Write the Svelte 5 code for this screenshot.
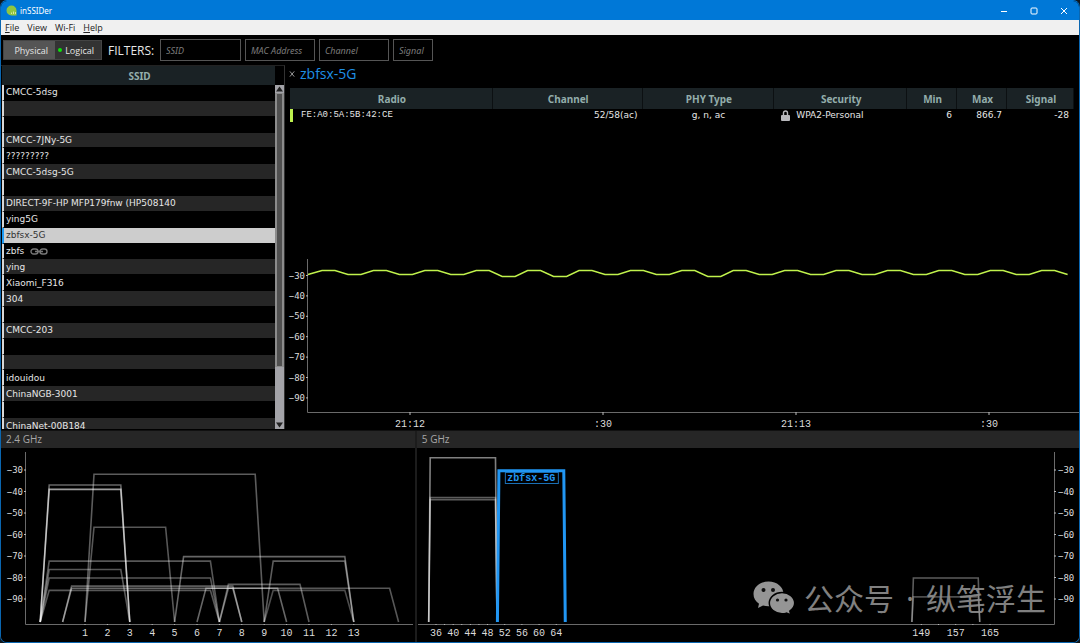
<script lang="ts">
  interface Network {
    ssid: string;
    linked?: boolean;
  }

  // channel range covered by a network and its level in dBm
  interface Shape {
    from: number;
    to: number;
    level: number;
    opacity: number;
  }

  const menus = ['File', 'View', 'Wi-Fi', 'Help'];

  const filters = [
    { id: 'ssid', label: 'SSID', size: 'wide' },
    { id: 'mac', label: 'MAC Address', size: 'medium' },
    { id: 'channel', label: 'Channel', size: 'medium' },
    { id: 'signal', label: 'Signal', size: 'small' }
  ];

  const networks: Network[] = [
    { ssid: 'CMCC-5dsg' },
    { ssid: '' },
    { ssid: '' },
    { ssid: 'CMCC-7JNy-5G' },
    { ssid: '?????????' },
    { ssid: 'CMCC-5dsg-5G' },
    { ssid: '' },
    { ssid: 'DIRECT-9F-HP MFP179fnw (HP508140' },
    { ssid: 'ying5G' },
    { ssid: 'zbfsx-5G' },
    { ssid: 'zbfs', linked: true },
    { ssid: 'ying' },
    { ssid: 'Xiaomi_F316' },
    { ssid: '304' },
    { ssid: '' },
    { ssid: 'CMCC-203' },
    { ssid: '' },
    { ssid: '' },
    { ssid: 'idouidou' },
    { ssid: 'ChinaNGB-3001' },
    { ssid: '' },
    { ssid: 'ChinaNet-00B184' }
  ];

  const levels = [-30, -40, -50, -60, -70, -80, -90];

  const times = [
    { x: 125, label: '21:12' },
    { x: 318, label: ':30' },
    { x: 511, label: '21:13' },
    { x: 704, label: ':30' }
  ];

  const dips = [3, 4, 7];

  const shapes24: Shape[] = [
    { from: 1, to: 9, level: -32, opacity: 0.36 },
    { from: -1, to: 3, level: -37, opacity: 0.4 },
    { from: -1, to: 3, level: -39, opacity: 0.62 },
    { from: 1, to: 5, level: -56.6, opacity: 0.34 },
    { from: -1, to: 7, level: -72.4, opacity: 0.34 },
    { from: -1, to: 3, level: -76.3, opacity: 0.34 },
    { from: -1, to: 7, level: -80.2, opacity: 0.34 },
    { from: -1, to: 7, level: -86, opacity: 0.34 },
    { from: 5, to: 13, level: -70.3, opacity: 0.4 },
    { from: 9, to: 13, level: -72.4, opacity: 0.36 },
    { from: 7, to: 11, level: -83.2, opacity: 0.36 },
    { from: 0, to: 8, level: -84, opacity: 0.36 },
    { from: 0, to: 8, level: -85, opacity: 0.4 },
    { from: 7, to: 15, level: -85, opacity: 0.34 },
    { from: 6, to: 10, level: -85, opacity: 0.4 },
    { from: 9, to: 13, level: -86, opacity: 0.3 }
  ];

  const shapes5: Shape[] = [
    { from: 34.3, to: 50.2, level: -24.3, opacity: 0.5 },
    { from: 34.3, to: 50.2, level: -42.8, opacity: 0.36 },
    { from: 34.3, to: 50.2, level: -43.8, opacity: 0.36 },
    { from: 146.8, to: 162.6, level: -80.2, opacity: 0.36 },
    { from: 146.8, to: 162.6, level: -89, opacity: 0.3 }
  ];

  const channels24 = Array.from({ length: 13 }, (_, i) => i + 1);
  const channels5 = [36, 40, 44, 48, 52, 56, 60, 64, 149, 157, 165];
  const ticks5 = [36, 38, 40, 42, 44, 46, 48, 52, 56, 60, 64, 149, 153, 157, 161, 165];

  let selected = 'zbfsx-5G';
  let timeWidth = 794;
  let width24 = 414;
  let width5 = 662;

  $: timeScale = timeWidth / 794;
  $: trace = getTrace(timeScale);
  $: x24 = (channel: number) => ((84 + (channel - 1) * 22.4) * width24) / 414;
  $: x5 = (channel: number) => ((19 + (channel - 36) * 4.295) * width5) / 662;

  function timeY(level: number): number {
    return 20.5 + (-30 - level) * 2.04;
  }

  function bandY(level: number): number {
    return 22 + (-30 - level) * 2.15;
  }

  function getTrace(scale: number): string {
    const points: string[] = [`${23 * scale},19.5`];
    for (let i = 0; i < 15; i++) {
      const x = 37 + i * 51.4;
      const low = dips.includes(i) ? 21.5 : 19.5;
      points.push(`${x * scale},15.5`, `${(x + 13) * scale},15.5`, `${(x + 26) * scale},${low}`);
      if (i < 14) {
        points.push(`${(x + 39) * scale},${low}`);
      }
    }
    return points.join(' ');
  }

  function outline(shape: Shape, x: (channel: number) => number, slope: number): string {
    const top = bandY(shape.level);
    return [
      `${x(shape.from)},174`,
      `${x(shape.from) + slope},${top}`,
      `${x(shape.to) - slope},${top}`,
      `${x(shape.to)},174`
    ].join(' ');
  }
</script>

<div class="window">
  <header class="titlebar">
    <svg class="logo" viewBox="0 0 11 11" aria-hidden="true">
      <path d="M5.5 0.5a5 5 0 0 1 5 5v5h-5a5 5 0 0 1 0-10z" fill="#8fc641" />
      <path d="M5 9V7.500h1V9zM7 9V6.500h1V9zM9 9V7h1v2z" fill="#d5e8a0" />
    </svg>
    <span class="app-name">inSSIDer</span>
    <button class="control" aria-label="Minimize">
      <svg viewBox="0 0 8 8"><path d="M1 4.5h6" /></svg>
    </button>
    <button class="control" aria-label="Maximize">
      <svg viewBox="0 0 8 8"><rect x="1" y="1" width="6" height="6" rx="1" /></svg>
    </button>
    <button class="control" aria-label="Close">
      <svg viewBox="0 0 8 8"><path d="M1 1l6 6M7 1L1 7" /></svg>
    </button>
  </header>

  <nav class="menubar">
    {#each menus as menu}
      <button class="menu">
        {#if menu === 'File' || menu === 'Help'}
          <u>{menu[0]}</u>{menu.slice(1)}
        {:else}
          {menu}
        {/if}
      </button>
    {/each}
  </nav>

  <div class="toolbar">
    <div class="switch">
      <button class="active">Physical</button>
      <button><span class="dot"></span>Logical</button>
    </div>
    <span class="filters-title">FILTERS:</span>
    {#each filters as filter}
      <input class={filter.size} id={filter.id} type="text" placeholder={filter.label} aria-label={filter.label} />
    {/each}
  </div>

  <main>
    <aside>
      <div class="list">
        <table class="networks">
          <thead>
            <tr><th>SSID</th></tr>
          </thead>
          <tbody>
            {#each networks as network}
              <tr
                class:selected={network.ssid === selected}
                on:click={() => (selected = network.ssid || selected)}
              >
                <td>
                  <span class="ssid">
                    {network.ssid}
                    {#if network.linked}
                      <svg class="link" viewBox="0 0 18 7" aria-label="Linked">
                        <rect x="1" y="1" width="7" height="5" rx="2.5" />
                        <rect x="10" y="1" width="7" height="5" rx="2.5" />
                        <path d="M5 3.5h8" />
                      </svg>
                    {/if}
                  </span>
                </td>
              </tr>
            {/each}
          </tbody>
        </table>
      </div>
      <div class="scrollbar">
        <svg viewBox="0 0 9 8"><path d="M1 6.5L4.5 1.5L8 6.5z" /></svg>
        <div class="thumb"></div>
        <div class="track"></div>
        <svg viewBox="0 0 9 8"><path d="M1 1.5h7L4.5 6.5z" /></svg>
      </div>
    </aside>

    <section class="detail">
      <div class="detail-title">
        <button class="close" aria-label="Close network">
          <svg viewBox="0 0 8 8"><path d="M1 1l5 6M6 1L1 7" /></svg>
        </button>
        <h1>{selected}</h1>
      </div>
      <table class="radios">
        <thead>
          <tr>
            <th class="radio">Radio</th>
            <th class="channel">Channel</th>
            <th class="phy">PHY Type</th>
            <th class="security">Security</th>
            <th class="rate">Min</th>
            <th class="rate">Max</th>
            <th class="signal">Signal</th>
          </tr>
        </thead>
        <tbody>
          <tr>
            <td class="mac">FE:A0:5A:5B:42:CE</td>
            <td class="right">52/58(ac)</td>
            <td class="center">g, n, ac</td>
            <td>
              <span class="secured">
                <svg viewBox="0 0 9 11" aria-hidden="true">
                  <path d="M2.5 5V3a2 2 0 0 1 4 0v2" fill="none" stroke="#b8b8bc" stroke-width="1.4" />
                  <rect y="5" width="9" height="6" rx="1" fill="#b8b8bc" />
                </svg>
                WPA2-Personal
              </span>
            </td>
            <td class="right">6</td>
            <td class="right">866.7</td>
            <td class="right">-28</td>
          </tr>
        </tbody>
      </table>

      <div class="time-chart" bind:clientWidth={timeWidth}>
        <svg>
          <path class="axis" d="M22.5 4V157.5H{timeWidth}" />
          {#each levels as level}
            <path class="tick" d="M21 {timeY(level)}h2" />
            <text x="20" y={timeY(level) + 3} text-anchor="end">−{-level}</text>
          {/each}
          {#each times as time}
            <path class="tick" d="M{time.x * timeScale} 157v3" />
            <text class="wide-text" x={time.x * timeScale} y="172" text-anchor="middle">{time.label}</text>
          {/each}
          <polyline class="trace" points={trace} />
        </svg>
      </div>
    </section>
  </main>

  <div class="bands">
    <section class="band">
      <h2>2.4 GHz</h2>
      <div class="band-chart" bind:clientWidth={width24}>
        <svg>
          <path class="axis" d="M24.5 4V176.5H{width24 - 2}" />
          {#each levels as level}
            <path class="tick" d="M23 {bandY(level)}h2" />
            <text x="22" y={bandY(level) + 3} text-anchor="end">−{-level}</text>
          {/each}
          {#each channels24 as channel}
            <path class="tick" d="M{x24(channel)} 176v1" />
            <text class="wide-text" x={x24(channel)} y="188" text-anchor="middle">{channel}</text>
          {/each}
          {#each shapes24 as shape}
            <polyline class="shape" points={outline(shape, x24, 9)} stroke-opacity={shape.opacity} />
          {/each}
        </svg>
      </div>
    </section>

    <section class="band">
      <h2>5 GHz</h2>
      <div class="band-chart" bind:clientWidth={width5}>
        <svg>
          <path class="axis" d="M{width5 - 24.5} 4V176.5H1" />
          {#each levels as level}
            <path class="tick" d="M{width5 - 25} {bandY(level)}h2" />
            <text x={width5 - 21} y={bandY(level) + 3}>−{-level}</text>
          {/each}
          {#each ticks5 as channel}
            <path class="tick" d="M{x5(channel)} 176v1" />
          {/each}
          {#each channels5 as channel}
            <text class="wide-text" x={x5(channel)} y="188" text-anchor="middle">{channel}</text>
          {/each}
          {#each shapes5 as shape}
            <polyline class="shape" points={outline(shape, x5, 1.5)} stroke-opacity={shape.opacity} />
          {/each}
          <polyline
            class="shape current"
            points={outline({ from: 50.3, to: 66.1, level: -30.3, opacity: 1 }, x5, 1.5)}
          />
          <rect class="tag" x={x5(58.2) - 26} y="24.5" width="53" height="11" />
          <text class="wide-text tag-text" x={x5(58.2)} y="33" text-anchor="middle">zbfsx-5G</text>
        </svg>
      </div>
    </section>
  </div>

  <div class="watermark">
    <svg viewBox="0 0 42 34" aria-hidden="true">
      <path
        d="M15.500 0.500C7 0.500 0.500 6 0.500 13c0 4 2 7.500 5.500 9.700L5 27l5-2.500c1.800.5 3.600.8 5.500.8C24 25.300 30.500 20 30.500 13S24 0.500 15.500 0.500z"
      />
      <circle class="eye" cx="10.500" cy="9" r="2" />
      <circle class="eye" cx="20" cy="9" r="2" />
      <path
        class="front"
        d="M29 11.500c-7 0-12.700 4.700-12.700 10.600S22 32.700 29 32.700c1.600 0 3-.2 4.400-.6L38 34l-1.200-4c3-2 4.900-4.800 4.900-7.900 0-5.900-5.700-10.600-12.700-10.600z"
      />
      <circle class="eye" cx="24.500" cy="19" r="1.600" />
      <circle class="eye" cx="33" cy="19" r="1.600" />
    </svg>
    <span>公众号<span class="separator">·</span>纵笔浮生</span>
  </div>
</div>

<style>
  :global(body) {
    background: #10171c;
  }

  .window {
    position: relative;
    display: flex;
    flex-direction: column;
    box-sizing: border-box;
    height: 100vh;
    border: 1px solid #0a66b0;
    border-top-color: #0078d7;
    border-radius: 7px;
    overflow: hidden;
    background: #000;
    color: #e6e6e6;
    font-family: 'Open Sans', 'Noto Sans', sans-serif;
    font-size: 9px;
  }

  button {
    padding: 0;
    border: none;
    background: transparent;
    color: inherit;
    font: inherit;
  }

  table {
    width: 100%;
    border-spacing: 0;
  }

  th {
    height: 20px;
    padding: 0 0 0 2px;
    background: #1a2225;
    color: #93adab;
    font-family: 'Noto Sans', 'Open Sans', sans-serif;
    font-size: 10px;
    font-weight: 700;
    line-height: 14px;
  }

  td {
    padding: 0;
    font-family: 'DejaVu Sans', sans-serif;
    font-size: 9px;
    line-height: 13px;
  }

  .titlebar {
    display: flex;
    align-items: center;
    flex: none;
    height: 19px;
    padding-left: 5px;
    background: #0078d7;
    color: #fff;
  }

  .logo {
    width: 11px;
    height: 11px;
    margin-right: 3px;
  }

  .app-name {
    flex: 1;
    font-family: 'Noto Sans', 'Open Sans', sans-serif;
    font-size: 8px;
  }

  .control {
    display: flex;
    align-items: center;
    justify-content: center;
    width: 30px;
    height: 19px;
  }

  .control svg {
    width: 8px;
    height: 8px;
    fill: none;
    stroke: #fff;
  }

  .menubar {
    display: flex;
    flex: none;
    gap: 8px;
    height: 15px;
    padding-left: 4px;
    background: #f0f0f0;
    color: #222;
  }

  .menu {
    line-height: 15px;
  }

  .toolbar {
    display: flex;
    align-items: center;
    flex: none;
    gap: 4px;
    height: 30px;
    padding-left: 2px;
  }

  .switch {
    display: flex;
    border: 1px solid #444;
    background: #333;
  }

  .switch button {
    display: flex;
    align-items: center;
    justify-content: flex-end;
    gap: 3px;
    width: 46px;
    height: 18px;
    padding-right: 7px;
    box-sizing: border-box;
  }

  .switch .active {
    width: 51px;
    background: #555;
  }

  .dot {
    width: 4px;
    height: 4px;
    border-radius: 50%;
    background: #0be30b;
  }

  .filters-title {
    width: 48px;
    margin-left: 2px;
    font-size: 12px;
  }

  input {
    box-sizing: border-box;
    width: 70px;
    height: 22px;
    padding: 0 5px;
    border: 1px solid #555;
    background: #000;
    color: #e6e6e6;
    font: italic 9px 'Noto Sans', 'Open Sans', sans-serif;
  }

  input::placeholder {
    color: #7c7c7c;
  }

  input.wide {
    width: 81px;
  }

  input.small {
    width: 40px;
  }

  main {
    display: flex;
    flex: 1;
    min-height: 0;
  }

  aside {
    display: flex;
    flex: none;
    width: 284px;
    border-right: 1px solid #333;
    border-top: 1px solid #222;
    margin-bottom: 1px;
    box-sizing: border-box;
  }

  .list {
    flex: 1;
    overflow: hidden;
    padding-left: 1px;
  }

  /* the last row runs under the lower edge of the list */
  .networks {
    height: calc(100% + 5px);
  }

  .networks th {
    height: 19px;
  }

  .networks td {
    padding-top: 1px;
    border-left: 2px solid #d8d8d8;
    border-bottom: 1px solid #000;
    background: #000;
  }

  .networks tr:nth-child(even) td {
    background: #262626;
  }

  .networks tr.selected td {
    border-left-color: #1e9bf5;
    background: #cdcdcd;
    color: #333;
  }

  .ssid {
    display: flex;
    align-items: center;
    gap: 6px;
    height: 13px;
    padding-left: 2px;
    white-space: nowrap;
  }

  .link {
    width: 18px;
    height: 7px;
    fill: none;
    stroke: #777;
    stroke-width: 1.4;
  }

  .scrollbar {
    display: flex;
    flex-direction: column;
    width: 9px;
    margin-top: 19px;
    background: #a3a3a8;
  }

  .scrollbar svg {
    flex: none;
    height: 8px;
    fill: #222;
  }

  .thumb {
    flex: 5;
    border: 1px solid #8c8c8c;
    border-width: 1px 2px;
    background: #505050;
  }

  .track {
    flex: 1;
  }

  .detail {
    display: flex;
    flex-direction: column;
    flex: 1;
    min-width: 0;
  }

  .detail-title {
    display: flex;
    align-items: center;
    gap: 4px;
    height: 18px;
    margin-bottom: 5px;
    padding-left: 4px;
  }

  .close svg {
    display: block;
    width: 7px;
    height: 8px;
    fill: none;
    stroke: #aaa;
  }

  h1 {
    margin: 0;
    color: #1e8fe6;
    font-size: 14px;
    font-weight: 400;
    line-height: 18px;
  }

  .radios {
    width: auto;
    margin: 0 5px;
    table-layout: fixed;
    min-width: calc(100% - 10px);
  }

  .radios th {
    height: 21px;
    border-right: 1px solid #0c1012;
  }

  .radio {
    width: 200px;
  }

  .channel {
    width: 147px;
  }

  .phy {
    width: 129px;
  }

  .security {
    width: 130px;
  }

  .rate {
    width: 47px;
  }

  .signal {
    width: 64px;
  }

  .radios .mac {
    padding-left: 8px;
    border-left: 3px solid #bdf04e;
    font-family: 'Liberation Mono', monospace;
  }

  .right {
    padding-right: 5px;
    text-align: right;
  }

  .center {
    text-align: center;
  }

  .secured {
    display: flex;
    align-items: center;
    gap: 6px;
    padding-left: 7px;
  }

  .secured svg {
    width: 9px;
    height: 11px;
  }

  .time-chart {
    height: 175px;
    margin-top: auto;
  }

  svg {
    display: block;
  }

  .time-chart svg,
  .band-chart svg {
    width: 100%;
    height: 100%;
  }

  text {
    fill: #dcdcdc;
    font-family: 'DejaVu Sans Mono', monospace;
    font-size: 9px;
  }

  .wide-text {
    font-family: 'Liberation Mono', monospace;
    font-size: 10px;
  }

  .axis {
    fill: none;
    stroke: #6a6a6a;
  }

  .tick {
    stroke: #bbb;
  }

  .trace {
    fill: none;
    stroke: #c0f24c;
    stroke-width: 1.4;
  }

  .bands {
    display: grid;
    grid-template-columns: minmax(0, 5fr) minmax(0, 8fr);
    flex: none;
    gap: 2px;
    border-top: 1px solid #111;
    background: #1c1c1c;
  }

  .band {
    background: #000;
  }

  h2 {
    margin: 0;
    padding: 0 0 1px 5px;
    background: #262626;
    color: #a8a8a8;
    font-size: 10px;
    font-weight: 400;
    line-height: 16px;
  }

  .band-chart {
    height: 194px;
  }

  .shape {
    fill: none;
    stroke: #fff;
    stroke-width: 1.6;
  }

  .current {
    stroke: #2196f3;
    stroke-width: 3;
  }

  .tag {
    fill: none;
    stroke: #1a6fb5;
  }

  .tag-text {
    fill: #2196f3;
    font-weight: 700;
  }

  .watermark {
    position: absolute;
    right: 33px;
    bottom: 21px;
    display: flex;
    align-items: center;
    gap: 9px;
    color: #8e8e8e;
    font-family: 'Noto Sans CJK SC', sans-serif;
    font-size: 30px;
    line-height: 44px;
    opacity: 0.9;
    pointer-events: none;
  }

  .watermark svg {
    width: 42px;
    height: 34px;
    fill: #a6a6a6;
  }

  .separator {
    display: inline-block;
    width: 32px;
    font-family: 'Noto Sans', sans-serif;
    text-align: center;
  }

  .watermark .front {
    stroke: #000;
    stroke-width: 1.5;
  }

  .watermark .eye {
    fill: #111;
  }
</style>
